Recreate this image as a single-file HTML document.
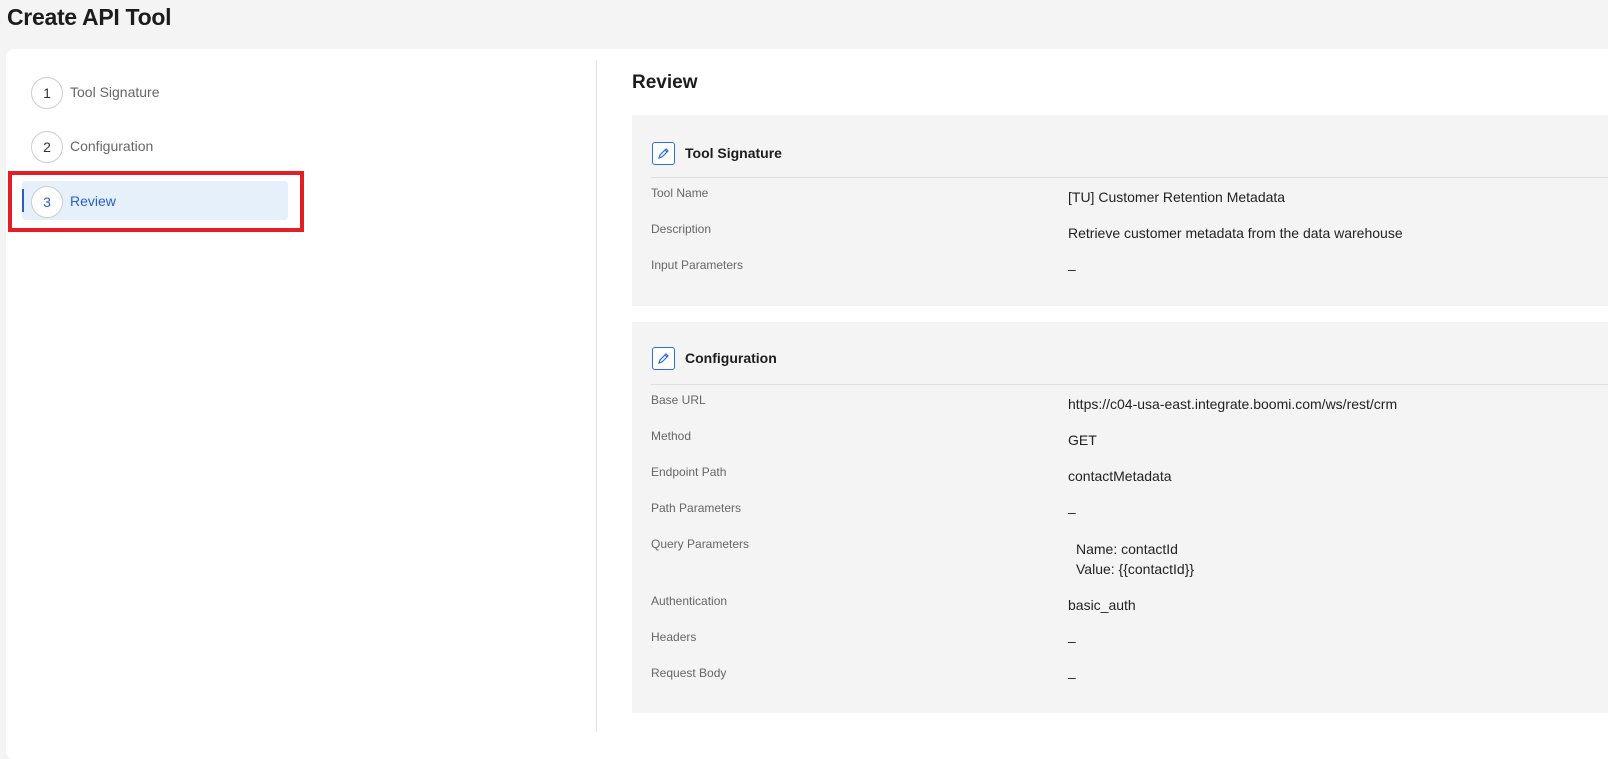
<!DOCTYPE html>
<html><head><style>
*{box-sizing:border-box;margin:0;padding:0}
body{width:1608px;height:750px;background:#f4f4f4;font-family:"Liberation Sans",sans-serif;position:relative;overflow:hidden;color:#222}
.abs{position:absolute}
h1{position:absolute;left:7px;top:4px;font-size:23px;font-weight:bold;color:#1c1c1c;letter-spacing:-0.3px}
.panel{position:absolute;left:6px;top:49px;width:1610px;height:710px;background:#fff;border-radius:8px}
.step{position:absolute;left:31px;width:32px;height:32px;border:1px solid #ccc;border-radius:50%;background:#fff;text-align:center;line-height:30px;font-size:14px;color:#333}
.sl{position:absolute;left:70px;font-size:14px;color:#666}
.sec{position:absolute;left:632px;width:980px;background:#f4f4f4}
.lab{position:absolute;left:651px;font-size:12px;color:#666}
.val{position:absolute;left:1068px;font-size:14px;color:#222}
.icon{position:absolute;left:652px;width:23px;height:23px;border:1px solid #2a6ee0;border-radius:3px;background:#fff}
.ht{position:absolute;left:685px;font-size:14px;font-weight:bold;color:#1c1c1c}
.hr{position:absolute;left:651px;width:960px;height:1px;background:#ddd}
</style></head><body>
<h1>Create API Tool</h1>
<div class="panel"></div>
<div class="abs" style="left:596px;top:60px;width:1px;height:672px;background:#e2e2e2"></div>

<div class="step" style="top:77px">1</div><div class="sl" style="top:84px">Tool Signature</div>
<div class="step" style="top:131px">2</div><div class="sl" style="top:138px">Configuration</div>
<div class="abs" style="left:22px;top:181px;width:266px;height:39px;background:#e6f0fb;border-radius:3px"></div>
<div class="abs" style="left:22px;top:189px;width:2px;height:23px;background:#2a5ccf"></div>
<div class="step" style="top:186px;color:#2a5ccf">3</div><div class="sl" style="top:193px;color:#2a5ccf">Review</div>
<div class="abs" style="left:8px;top:171px;width:296px;height:61px;border:4px solid #e31e24"></div>

<div class="abs" style="left:632px;top:72px;font-size:19px;font-weight:bold;color:#1c1c1c">Review</div>

<div class="sec" style="top:115px;height:191px"></div>
<div class="icon" style="top:142px"><svg width="21" height="21" viewBox="0 0 21 21"><path d="M6 15l1-3 6-6 2 2-6 6z M12 7l2 2" fill="none" stroke="#2a6ee0" stroke-width="1.2"/></svg></div>
<div class="ht" style="top:145px">Tool Signature</div>
<div class="hr" style="top:177px"></div>
<div class="lab" style="top:186px">Tool Name</div><div class="val" style="top:189px">[TU] Customer Retention Metadata</div>
<div class="lab" style="top:222px">Description</div><div class="val" style="top:225px">Retrieve customer metadata from the data warehouse</div>
<div class="lab" style="top:258px">Input Parameters</div><div class="val" style="top:261px">–</div>

<div class="sec" style="top:322px;height:391px"></div>
<div class="icon" style="top:347px"><svg width="21" height="21" viewBox="0 0 21 21"><path d="M6 15l1-3 6-6 2 2-6 6z M12 7l2 2" fill="none" stroke="#2a6ee0" stroke-width="1.2"/></svg></div>
<div class="ht" style="top:350px">Configuration</div>
<div class="hr" style="top:384px"></div>
<div class="lab" style="top:393px">Base URL</div><div class="val" style="top:396px">https://c04-usa-east.integrate.boomi.com/ws/rest/crm</div>
<div class="lab" style="top:429px">Method</div><div class="val" style="top:432px">GET</div>
<div class="lab" style="top:465px">Endpoint Path</div><div class="val" style="top:468px">contactMetadata</div>
<div class="lab" style="top:501px">Path Parameters</div><div class="val" style="top:504px">–</div>
<div class="lab" style="top:537px">Query Parameters</div><div class="val" style="top:539px;left:1076px;line-height:20px">Name: contactId<br>Value: {{contactId}}</div>
<div class="lab" style="top:594px">Authentication</div><div class="val" style="top:597px">basic_auth</div>
<div class="lab" style="top:630px">Headers</div><div class="val" style="top:633px">–</div>
<div class="lab" style="top:666px">Request Body</div><div class="val" style="top:669px">–</div>
</body></html>
